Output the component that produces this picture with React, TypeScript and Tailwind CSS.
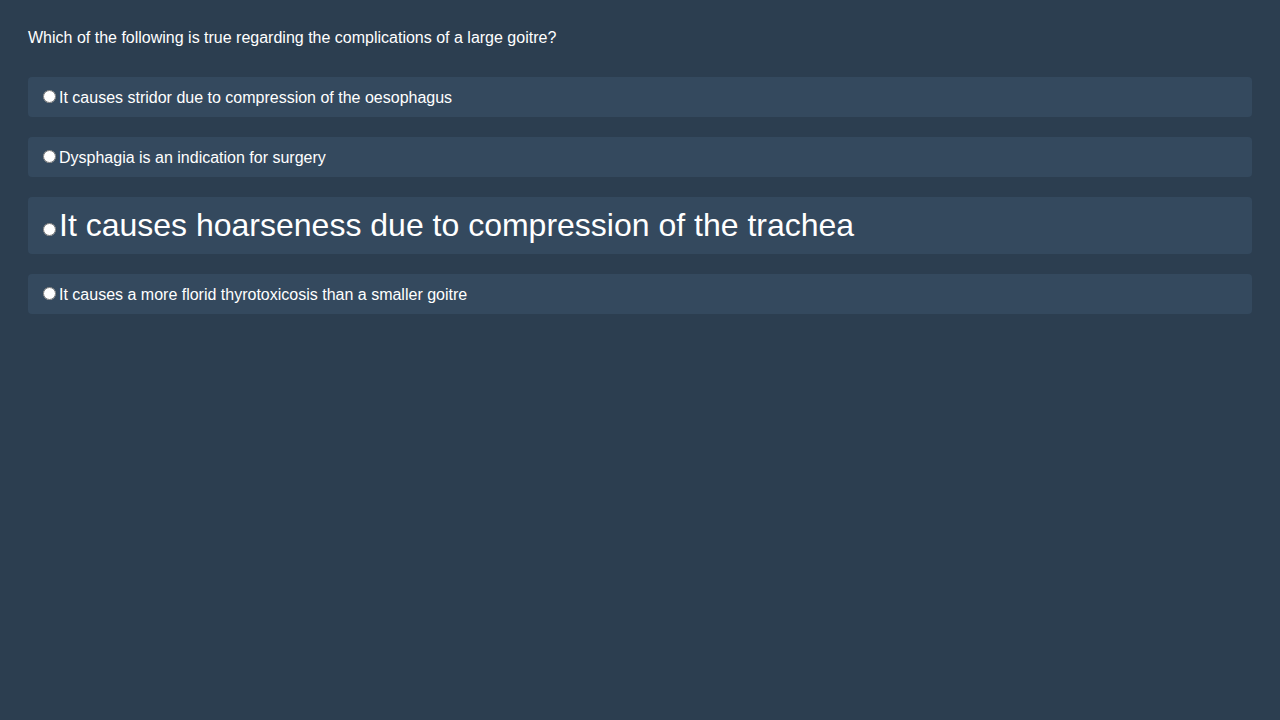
import React from 'react';

const options = [
  { text: 'It causes stridor due to compression of the oesophagus', big: false },
  { text: 'Dysphagia is an indication for surgery', big: false },
  { text: 'It causes hoarseness due to compression of the trachea', big: true },
  { text: 'It causes a more florid thyrotoxicosis than a smaller goitre', big: false },
];

const App = () => {
  return (
    <div className="min-h-[720px] bg-[#2c3e50] p-7 text-white font-['Liberation_Sans',Arial,sans-serif]">
      <p className="text-base leading-[normal] pt-px">
        Which of the following is true regarding the complications of a large goitre?
      </p>
      <div className="mt-[30px] flex flex-col gap-5">
        {options.map((o, i) => (
          <label key={i} className="block rounded bg-[#34495e] p-[10px] leading-[normal]">
            <input type="radio" name="q" className="mt-[3px] mr-[3px] ml-[5px]" />
            <span className={o.big ? 'text-[32px] leading-[normal]' : 'text-base leading-[normal]'}>{o.text}</span>
          </label>
        ))}
      </div>
    </div>
  );
};

export default App;
